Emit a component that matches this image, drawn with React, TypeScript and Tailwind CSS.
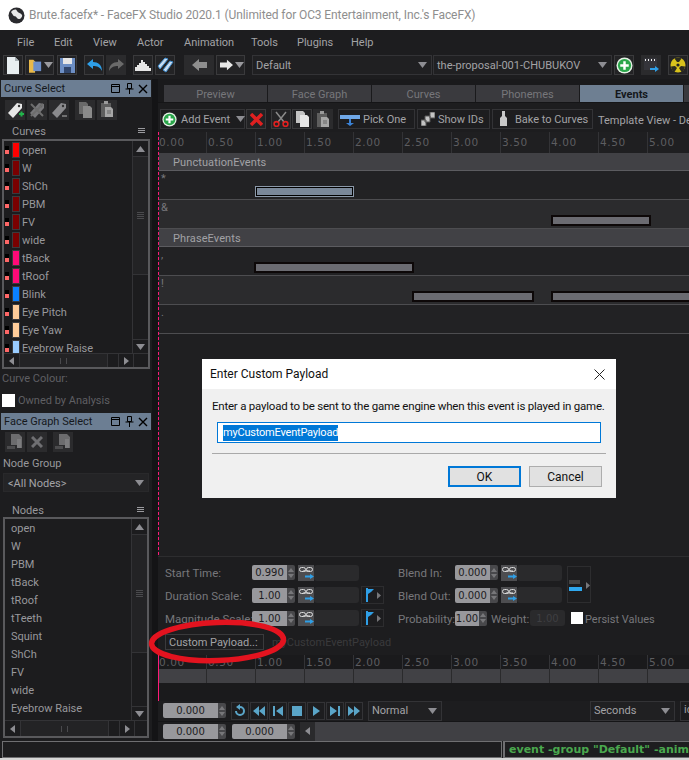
import type { ReactNode } from "react";

const curves = [
  ["open", "#ff0000"],
  ["W", "#7a0000"],
  ["ShCh", "#7a0000"],
  ["PBM", "#7a0000"],
  ["FV", "#7a0000"],
  ["wide", "#7a0000"],
  ["tBack", "#ff0a78"],
  ["tRoof", "#ff0a78"],
  ["Blink", "#0a80ff"],
  ["Eye Pitch", "#ffcc99"],
  ["Eye Yaw", "#ffcc99"],
  ["Eyebrow Raise", "#99ccff"],
];
const nodes = ["open", "W", "PBM", "tBack", "tRoof", "tTeeth", "Squint", "ShCh", "FV", "wide", "Eyebrow Raise"];
const ticks = ["0.00", "0.50", "1.00", "1.50", "2.00", "2.50", "3.00", "3.50", "4.00", "4.50", "5.00"];

function Btn({ w = 20, h = 20, children, flat }: { w?: number; h?: number; children?: ReactNode; flat?: boolean }) {
  return (
    <div
      className={`flex shrink-0 items-center justify-center ${flat ? "bg-[#2b2b2d]" : "border border-[#3a3a3c] bg-[#232325]"}`}
      style={{ width: w, height: h }}
    >
      {children}
    </div>
  );
}

function Caret({ color = "#8d8d92" }: { color?: string }) {
  return (
    <svg width="9" height="6" viewBox="0 0 9 6" className="shrink-0">
      <path d="M0 0h9L4.5 6z" fill={color} />
    </svg>
  );
}

function PageIcon({ fill = "#e8eef0" }: { fill?: string }) {
  return (
    <svg width="14" height="17" viewBox="0 0 14 17">
      <path d="M1 0h8l4 4v13H1z" fill={fill} />
      <path d="M9 0l4 4H9z" fill="#a8b0b4" />
    </svg>
  );
}

function CopyIcon({ dim }: { dim?: boolean }) {
  const c = dim ? "#8a8a8a" : "#e6e6e6";
  return (
    <svg width="15" height="16" viewBox="0 0 15 16">
      <path d="M1 0h7l2 2v10H1z" fill={dim ? "#6a6a6a" : "#c4c4c4"} />
      <path d="M5 4h7l2 2v10H5z" fill={c} />
    </svg>
  );
}

function NodeIcon() {
  return (
    <svg width="16" height="16" viewBox="0 0 16 16">
      <path d="M4 0h8l3 3v11h-5v-3H4z" fill="#6c6c6e" />
      <path d="M0 12h8v3H0z" fill="#4c4c4e" />
      <path d="M10 5h4v9h-4z" fill="#7c7c7e" />
    </svg>
  );
}

function PasteIcon() {
  return (
    <svg width="14" height="17" viewBox="0 0 14 17">
      <path d="M1 2h10v14H1z" fill="#5e5e5e" />
      <path d="M4 0h4v3H4z" fill="#9a9a9a" />
      <path d="M5 6h6l2 2v8H5z" fill="#a6a6a6" />
      <path d="M7 10h4M7 12h4" stroke="#666" />
    </svg>
  );
}

function Tag({ color = "#e8e8e8", mark }: { color?: string; mark?: "plus" | "x" | "minus" }) {
  return (
    <svg width="18" height="18" viewBox="0 0 18 18">
      <path d="M2 12L11 2l5 1 0 4-9 10z" fill={color} />
      <circle cx="13" cy="5" r="1.2" fill="#333" />
      {mark === "plus" && <path d="M13 13h5M15.5 10.5v5" stroke="#21b34a" strokeWidth="2" />}
      {mark === "minus" && <path d="M12 15h5" stroke="#888" strokeWidth="1.5" />}
      {mark === "x" && <path d="M3 3l12 12M15 3L3 15" stroke="#6d6d6d" strokeWidth="2" />}
    </svg>
  );
}

function PlusCircle({ size = 17 }: { size?: number }) {
  return (
    <svg width={size} height={size} viewBox="0 0 18 18" className="shrink-0">
      <circle cx="9" cy="9" r="8.5" fill="#e6f2e6" />
      <circle cx="9" cy="9" r="7" fill="#2aa64a" />
      <path d="M9 4.5v9M4.5 9h9" stroke="#fff" strokeWidth="2.6" />
    </svg>
  );
}

function Combo({ w, label, className = "" }: { w: number; label: string; className?: string }) {
  return (
    <div
      className={`flex h-[20px] shrink-0 items-center justify-between border border-[#333336] bg-[#202022] pr-[4px] pl-[3px] text-[11px] text-[#a3a3a6] ${className}`}
      style={{ width: w }}
    >
      <span className="pt-[2px] whitespace-nowrap">{label}</span>
      <Caret />
    </div>
  );
}

function Panel({ title }: { title: string }) {
  return (
    <div className="ml-[1px] flex h-[17px] w-[150px] items-center justify-between bg-[#6c7e93] pr-[3px] pl-[3px] text-[11px] leading-none text-[#15181c]">
      <span>{title}</span>
      <div className="flex items-center gap-[4px]">
        <svg width="10" height="10" viewBox="0 0 10 10" fill="none" stroke="#000">
          <path d="M.5.5h8v8h-8zM.5 2.5h8" />
        </svg>
        <svg width="9" height="11" viewBox="0 0 9 11" fill="none" stroke="#000">
          <path d="M2.5.5h4v5h-4zM.5 6h8M4.5 6v5" />
        </svg>
        <svg width="10" height="10" viewBox="0 0 10 10" stroke="#000" strokeWidth="1.4">
          <path d="M1 1l8 8M9 1L1 9" />
        </svg>
      </div>
    </div>
  );
}

function VScroll() {
  return (
    <div className="flex h-full w-[16px] shrink-0 flex-col border-l border-[#333336]">
      <div className="flex h-[16px] items-center justify-center border-b border-[#333336]">
        <svg width="9" height="6" viewBox="0 0 9 6">
          <path d="M4.5 0L9 6H0z" fill="#8d8d92" />
        </svg>
      </div>
      <div className="flex flex-1 flex-col">
        <div className="flex h-[118px] flex-col items-center justify-center gap-[1px] border-b border-[#333336] bg-[#232325]">
          <div className="h-[1px] w-[7px] bg-[#4a4a4d]" />
          <div className="h-[1px] w-[7px] bg-[#4a4a4d]" />
          <div className="h-[1px] w-[7px] bg-[#4a4a4d]" />
          <div className="h-[1px] w-[7px] bg-[#4a4a4d]" />
        </div>
      </div>
      <div className="flex h-[14px] items-center justify-center border-t border-[#333336]">
        <Caret />
      </div>
    </div>
  );
}

function HScroll({ h }: { h: number }) {
  return (
    <div className="flex shrink-0 border-t border-[#333336]" style={{ height: h }}>
      <div className="flex w-[16px] items-center justify-center border-r border-[#333336]">
        <svg width="5" height="8" viewBox="0 0 5 8">
          <path d="M5 0v8L0 4z" fill="#8d8d92" />
        </svg>
      </div>
      <div className="flex w-[88px] items-center justify-center border-r border-[#333336] bg-[#232325]">
        <div className="h-[6px] w-[7px] border-x border-[#4a4a4d]" />
      </div>
      <div className="w-[10px]" />
      <div className="flex w-[15px] items-center justify-center border-l border-[#333336]">
        <svg width="5" height="8" viewBox="0 0 5 8">
          <path d="M0 0v8l5-4z" fill="#8d8d92" />
        </svg>
      </div>
      <div className="flex-1 border-l border-[#333336]" />
    </div>
  );
}

function ListHeader({ title, x, h }: { title: string; x: number; h: number }) {
  return (
    <div className="flex items-center justify-between pr-[5px] text-[11px] text-[#98989c]" style={{ paddingLeft: x, height: h }}>
      <span className="pt-[3px]">{title}</span>
      <svg width="7" height="6" viewBox="0 0 7 6" stroke="#9a9a9e">
        <path d="M0 .5h7M0 2.5h7M0 4.5h7" />
      </svg>
    </div>
  );
}

function Spinner({ value, w = 43 }: { value: string; w?: number }) {
  return (
    <div className="flex h-[15px] shrink-0 items-stretch" style={{ width: w }}>
      <div className="flex flex-1 items-center justify-center rounded-l-[2px] bg-[#98989c] font-['DejaVu_Sans'] text-[10px] text-[#1c1c22]">
        {value}
      </div>
      <div className="flex w-[8px] flex-col items-center justify-center gap-[2px] rounded-r-[2px] bg-[#48484b]">
        <svg width="6" height="4" viewBox="0 0 6 4">
          <path d="M3 0l3 4H0z" fill="#77777a" />
        </svg>
        <svg width="6" height="4" viewBox="0 0 6 4">
          <path d="M3 4L0 0h6z" fill="#77777a" />
        </svg>
      </div>
    </div>
  );
}

function Link() {
  return (
    <div className="flex h-[16px] w-[16px] shrink-0 items-center justify-center bg-[#4d4d50]">
      <svg width="15" height="14" viewBox="0 0 15 14" fill="none">
        <rect x=".5" y="1.5" width="6" height="4" rx="2" stroke="#dcdcdc" />
        <rect x="7.5" y="1.5" width="6" height="4" rx="2" stroke="#dcdcdc" />
        <path d="M4 5h7" stroke="#dcdcdc" />
        <path d="M6 10.5h7" stroke="#2f9fe6" strokeWidth="2" />
        <path d="M11 8l4 2.5-4 2.5z" fill="#2f9fe6" />
      </svg>
    </div>
  );
}

function Flag() {
  return (
    <div className="ml-[2px] flex h-[18px] w-[23px] shrink-0 items-center gap-[3px] border border-[#2d2d2f] bg-[#1d1d1f] pl-[2px]">
      <svg width="10" height="14" viewBox="0 0 10 14">
        <path d="M2 0h2v14H2zM4 1h6L7 4 4 6z" fill="#2f9fe6" />
      </svg>
      <svg width="4" height="7" viewBox="0 0 4 7">
        <path d="M0 0l4 3.5L0 7z" fill="#77777a" />
      </svg>
    </div>
  );
}

function Field({ w = 45 }: { w?: number }) {
  return <div className="h-[16px] shrink-0 rounded-[3px] bg-[#2a2a2c]" style={{ width: w }} />;
}

function Ruler() {
  return (
    <div className="-ml-[1px] flex">
      {ticks.concat("5.50").map((t) => (
        <div key={t} className="h-[21px] w-[49px] shrink-0 border-r border-[#333336] pt-[4px] pl-[1px] font-['DejaVu_Sans'] text-[10.5px] leading-[12px] tracking-[.6px] whitespace-nowrap text-[#5d5d60]">
          {t}
        </div>
      ))}
    </div>
  );
}

function Track({ label, alt, children }: { label: string; alt?: boolean; children?: ReactNode }) {
  return (
    <div className={`relative h-[29px] border-b border-[#4d4d50] pt-[1px] pl-[2px] text-[11px] leading-[14px] text-[#77777b] ${alt ? "bg-[#2b2b2d]" : "bg-[#222224]"}`}>
      {label}
      {children}
    </div>
  );
}

function EventBar({ left, w, top, selected }: { left: number; w: number; top: number; selected?: boolean }) {
  return (
    <div
      className={`absolute h-[11px] ${selected ? "border border-[#8b98a8] bg-[#7a8899] outline-1 -outline-offset-2 outline-black" : "border-2 border-[#0d0808] bg-[#6b6b71]"}`}
      style={{ left, width: w, top }}
    />
  );
}

function GroupRow({ title }: { title: string }) {
  return (
    <div className="flex h-[18px] items-center border-b border-[#5c5c60] bg-[#414145] pt-[3px] pl-[14px] text-[11px] tracking-[.1px] text-[#a2a2a6]">
      {title}
    </div>
  );
}

function Transport({ children }: { children: ReactNode }) {
  return (
    <div className="flex h-[18px] w-[18px] shrink-0 items-center justify-center border border-[#333336] bg-[#1d1d1f]">
      <svg width="14" height="14" viewBox="0 0 14 14" fill="#5aa5c8">
        {children}
      </svg>
    </div>
  );
}

function PropLabel({ w, children }: { w: number; children: ReactNode }) {
  return (
    <span className="shrink-0 pt-[3px] whitespace-nowrap" style={{ width: w }}>
      {children}
    </span>
  );
}

export default function App() {
  return (
    <div className="relative h-[760px] w-[689px] overflow-hidden bg-[#1d1d1f] font-['Roboto',sans-serif]">
      {/* title bar */}
      <div className="flex h-[30px] items-center bg-white pl-[8px] text-[12px] tracking-[-.1px] text-[#8e8e8e]">
        <svg width="17" height="17" viewBox="0 0 17 17" className="mr-[4px]">
          <circle cx="8.5" cy="8.5" r="8" fill="#2a2a2e" />
          <path d="M3 5c3-3 5-3 6-1s4 2 5 4-3 6-5 3-3-1-4-3z" fill="#e8e8e8" />
        </svg>
        Brute.facefx* - FaceFX Studio 2020.1 (Unlimited for OC3 Entertainment, Inc.'s FaceFX)
      </div>

      {/* menu */}
      <div className="flex h-[25px] items-center pt-[2px] pl-[17px] text-[11px] text-[#a3a3a6]">
        <span className="w-[37px]">File</span>
        <span className="w-[39px]">Edit</span>
        <span className="w-[44px]">View</span>
        <span className="w-[47px]">Actor</span>
        <span className="w-[67px]">Animation</span>
        <span className="w-[46px]">Tools</span>
        <span className="w-[54px]">Plugins</span>
        <span>Help</span>
      </div>

      {/* main toolbar */}
      <div className="flex h-[24px] items-start pl-[3px]">
        <Btn><PageIcon /></Btn>
        <div className="ml-[2px] flex h-[20px] w-[29px] items-center gap-[2px] border border-[#3a3a3c] bg-[#232325] pl-[3px]">
          <svg width="15" height="17" viewBox="0 0 15 17">
            <path d="M0 2h5l2 2v13H0z" fill="#e9b949" />
            <path d="M5 4h9v11H5z" fill="#6d8fc9" />
          </svg>
          <Caret color="#9a9a9e" />
        </div>
        <div className="ml-[3px]">
          <Btn>
            <svg width="15" height="15" viewBox="0 0 15 15">
              <path d="M0 0h15v15H0z" fill="#6c8ec4" />
              <path d="M3 0h9v6H3z" fill="#e6e6e6" />
              <path d="M4 9h7v6H4z" fill="#30456b" />
            </svg>
          </Btn>
        </div>
        <div className="ml-[7px]">
          <Btn>
            <svg width="17" height="15" viewBox="0 0 17 15">
              <path d="M1 6l6-5v3c5 0 9 3 9 9-2-4-5-5-9-5v3z" fill="#2e9fe8" />
            </svg>
          </Btn>
        </div>
        <div className="ml-[2px]">
          <Btn flat>
            <svg width="17" height="15" viewBox="0 0 17 15">
              <path d="M16 6l-6-5v3C5 4 1 7 1 13c2-4 5-5 9-5v3z" fill="#6a6a6a" />
            </svg>
          </Btn>
        </div>
        <div className="ml-[7px]">
          <Btn>
            <svg width="16" height="12" viewBox="0 0 16 12">
              <path d="M0 12V8h2V6h2V4h2V1h2v2h2v2h2v2h2v2h2v3z" fill="#e6e6e6" />
            </svg>
          </Btn>
        </div>
        <div className="ml-[2px]">
          <Btn>
            <svg width="17" height="17" viewBox="0 0 17 17">
              <path d="M1 9l7-8 3 1-8 10zM6 13l7-9 3 1-7 10z" fill="#c8dcf0" stroke="#3c88c8" />
            </svg>
          </Btn>
        </div>
        <div className="ml-[9px]">
          <Btn w={30} flat>
            <svg width="15" height="12" viewBox="0 0 15 12">
              <path d="M0 6l7-6v3h8v6H7v3z" fill="#8e8e8e" />
            </svg>
          </Btn>
        </div>
        <div className="ml-[2px] flex h-[20px] w-[29px] items-center gap-[2px] border border-[#3a3a3c] bg-[#232325] pl-[3px]">
          <svg width="15" height="12" viewBox="0 0 15 12">
            <path d="M15 6L8 0v3H0v6h8v3z" fill="#e8e8e8" />
          </svg>
          <Caret color="#9a9a9e" />
        </div>
        <Combo w={180} label="Default" className="ml-[7px]" />
        <Combo w={179} label="the-proposal-001-CHUBUKOV" className="ml-[1px]" />
        <div className="ml-[2px]">
          <Btn><PlusCircle /></Btn>
        </div>
        <div className="ml-[7px]">
          <Btn flat>
            <svg width="16" height="16" viewBox="0 0 16 16">
              <path d="M1 1h13v12H1z" fill="#34343a" />
              <path d="M2 3h2M5 3h2M8 3h2M11 3h2" stroke="#eee" strokeWidth="2" strokeDasharray="1 1" />
              <path d="M7 12h6" stroke="#2f9fe6" strokeWidth="2" />
              <path d="M12 9l4 3-4 3z" fill="#2f9fe6" />
            </svg>
          </Btn>
        </div>
        <div className="ml-[7px]">
          <Btn>
            <svg width="16" height="16" viewBox="0 0 16 16">
              <circle cx="8" cy="8" r="7.5" fill="#d8c21c" />
              <circle cx="8" cy="8" r="1.6" fill="#222" />
              <path d="M7 5L4.5 1.5a7 7 0 0 1 7 0L9 5zM5 9l-4 .5a7 7 0 0 0 3.5 5.5L7 11zM11 9l4 .5a7 7 0 0 1-3.5 5.5L9 11z" fill="#2a2a20" />
            </svg>
          </Btn>
        </div>
      </div>

      {/* panels */}
      <div className="flex h-[662px]">
        <aside className="w-[152px] shrink-0">
          <div className="h-[1px]" />
          <Panel title="Curve Select" />
          <div className="flex h-[25px] items-center gap-[2px] pl-[5px]">
            <Btn flat><Tag mark="plus" /></Btn>
            <Btn flat><Tag color="#77777a" mark="x" /></Btn>
            <Btn flat><Tag color="#8a8a8d" mark="minus" /></Btn>
            <div className="w-[2px]" />
            <Btn flat><CopyIcon dim /></Btn>
            <Btn flat><PasteIcon /></Btn>
          </div>
          <div className="ml-[2px] w-[148px]">
            <ListHeader title="Curves" x={10} h={17} />
            <div className="flex h-[230px] flex-col border-2 border-[#59595c] bg-[#1c1c1e]">
              <div className="flex min-h-0 flex-1">
                <div className="flex-1 overflow-hidden">
                  {curves.map(([name, color]) => (
                    <div key={name} className="flex h-[18px] items-center text-[11px] text-[#98989c]">
                      <div className="ml-[1px] flex h-[8px] w-[4px] flex-col">
                        <div className="h-[4px] bg-black" />
                        <div className="h-[4px] bg-[#ff6666]" />
                      </div>
                      <div className="mr-[2px] ml-[3px] h-[16px] w-[8px] border border-[#3a3a3c]" style={{ backgroundColor: color }} />
                      <span className="pt-[2px]">{name}</span>
                    </div>
                  ))}
                </div>
                <VScroll />
              </div>
              <HScroll h={14} />
            </div>
          </div>
          <div className="mt-[2px] pl-[2px] text-[11px] leading-[16px] text-[#5f5f63]">Curve Colour:</div>
          <div className="mt-[6px] flex h-[14px] items-center gap-[3px] pl-[2px] text-[11px] text-[#5f5f63]">
            <div className="h-[13px] w-[13px] bg-white" />
            <span className="pt-[2px]">Owned by Analysis</span>
          </div>
          <div className="h-[6px]" />
          <Panel title="Face Graph Select" />
          <div className="flex h-[23px] items-center gap-[2px] pl-[5px]">
            <Btn flat><NodeIcon /></Btn>
            <Btn flat>
              <svg width="12" height="12" viewBox="0 0 12 12" stroke="#6f6f72" strokeWidth="3">
                <path d="M1 1l10 10M11 1L1 11" />
              </svg>
            </Btn>
            <div className="w-[2px]" />
            <Btn flat><NodeIcon /></Btn>
          </div>
          <div className="mt-[3px] pl-[3px] text-[11px] leading-[16px] text-[#98989c]">Node Group</div>
          <div className="mt-[1px] ml-[3px] flex h-[19px] w-[146px] items-center justify-between border border-[#29292b] bg-[#242426] pr-[4px] pl-[4px] text-[11px] text-[#a3a3a6]">
            <span className="pt-[3px]">&lt;All Nodes&gt;</span>
            <Caret />
          </div>
          <div className="mt-[10px] ml-[3px] w-[146px]">
            <ListHeader title="Nodes" x={9} h={15} />
            <div className="flex h-[221px] flex-col border-2 border-[#59595c] bg-[#1c1c1e]">
              <div className="flex min-h-0 flex-1">
                <div className="flex-1 overflow-hidden pl-[6px] text-[11px] text-[#98989c]">
                  {nodes.map((n) => (
                    <div key={n} className="flex h-[18px] items-center pt-[2px]">{n}</div>
                  ))}
                </div>
                <VScroll />
              </div>
              <HScroll h={16} />
            </div>
          </div>
        </aside>

        <div className="w-[6px] shrink-0 bg-[#141416]" />

        <main className="min-w-0 flex-1">
          {/* tabs */}
          <div className="flex h-[24px] items-end gap-[1px] border-b border-[#151517] bg-[#1a1a1c] pl-[6px] text-[11px] text-[#77777b]">
            {["Preview", "Face Graph", "Curves", "Phonemes"].map((t) => (
              <div key={t} className="flex h-[17px] w-[103px] shrink-0 items-center justify-center bg-[#3a3a3e] pt-[4px]">{t}</div>
            ))}
            <div className="flex h-[17px] w-[103px] shrink-0 items-center justify-center bg-[#6e7f92] pt-[4px] font-bold text-[#14171b]">Events</div>
            <div className="h-[17px] w-[20px] shrink-0 bg-[#3a3a3e]" />
          </div>

          {/* event toolbar */}
          <div className="flex h-[29px] items-start overflow-hidden pt-[6px] pl-[2px] text-[11px] whitespace-nowrap text-[#a3a3a6]">
            <div className="flex h-[20px] w-[85px] shrink-0 items-center gap-[4px] border border-[#333336] pl-[1px]">
              <PlusCircle size={15} />
              <span className="pt-[2px]">Add Event</span>
              <span className="ml-[2px]"><Caret /></span>
            </div>
            <div className="ml-[1px]">
              <Btn>
                <svg width="13" height="13" viewBox="0 0 13 13" stroke="#e02020" strokeWidth="3.4">
                  <path d="M1 1l11 11M12 1L1 12" />
                </svg>
              </Btn>
            </div>
            <div className="ml-[5px]">
              <Btn>
                <svg width="16" height="16" viewBox="0 0 16 16" fill="none">
                  <path d="M3 1l8 10M13 1L5 11" stroke="#8a8a8a" strokeWidth="1.5" />
                  <circle cx="3.5" cy="13" r="2.4" stroke="#e02020" strokeWidth="1.6" />
                  <circle cx="12.5" cy="13" r="2.4" stroke="#e02020" strokeWidth="1.6" />
                </svg>
              </Btn>
            </div>
            <div className="ml-[1px]"><Btn><CopyIcon /></Btn></div>
            <div className="ml-[1px]"><Btn flat><PasteIcon /></Btn></div>
            <div className="ml-[5px] flex h-[20px] w-[77px] shrink-0 items-center gap-[3px] border border-[#333336] pl-[1px]">
              <svg width="20" height="13" viewBox="0 0 20 13">
                <path d="M0 2h20v4H0z" fill="#6fa8e8" />
                <path d="M9 6h2v4h3l-4 3-4-3h3z" fill="#3b82d6" />
              </svg>
              <span className="pt-[2px]">Pick One</span>
            </div>
            <div className="ml-[2px] flex h-[20px] w-[73px] shrink-0 items-center gap-[3px] border border-[#333336] pl-[3px]">
              <svg width="14" height="14" viewBox="0 0 14 14" fill="#c4c4c4">
                <path d="M0 8h5v6H0zM4 4h5v6H4zM9 0h5v6H9z" stroke="#555" />
              </svg>
              <span className="pt-[2px]">Show IDs</span>
            </div>
            <div className="ml-[2px] flex h-[20px] w-[101px] shrink-0 items-center gap-[7px] border border-[#333336] pl-[6px]">
              <svg width="9" height="16" viewBox="0 0 9 16" fill="#c8c8c8">
                <path d="M3 0h3v5l2 2v8H1V7l2-2z" />
              </svg>
              <span className="pt-[2px]">Bake to Curves</span>
            </div>
            <span className="ml-[5px] pt-[4px]">Template View - Default</span>
          </div>

          {/* timeline */}
          <div className="flex h-[424px] bg-[#1f1f21]">
            <div className="w-[1px] shrink-0 bg-[repeating-linear-gradient(to_bottom,#ff1a78_0,#ff1a78_3px,transparent_3px,transparent_5px)]" />
            <div className="min-w-0 flex-1 overflow-hidden">
              <Ruler />
              <GroupRow title="PunctuationEvents" />
              <Track label="*">
                <EventBar left={96} w={99} top={15} selected />
              </Track>
              <Track label="&" alt>
                <EventBar left={392} w={100} top={15} />
              </Track>
              <GroupRow title="PhraseEvents" />
              <Track label=",">
                <EventBar left={95} w={160} top={15} />
              </Track>
              <Track label="!" alt>
                <EventBar left={253} w={122} top={15} />
                <EventBar left={392} w={140} top={15} />
              </Track>
              <Track label=".">{null}</Track>
            </div>
          </div>

          {/* properties */}
          <div className="h-[99px] border-t border-[#2d2d2f] pl-[7px] text-[11.5px] text-[#77777b]">
            <div className="flex h-[22px] items-center pt-[9px]">
              <div className="flex items-center">
                <PropLabel w={87}>Start Time:</PropLabel>
                <Spinner value="0.990" />
                <div className="w-[3px]" />
                <Link />
                <Field />
                <div className="w-[25px]" />
              </div>
              <div className="ml-[14px] flex items-center">
                <PropLabel w={57}>Blend In:</PropLabel>
                <Spinner value="0.000" />
                <div className="w-[3px]" />
                <Link />
                <Field />
              </div>
            </div>
            <div className="mt-[8px] flex h-[16px] items-center">
              <PropLabel w={87}>Duration Scale:</PropLabel>
              <Spinner value="1.00" />
              <div className="w-[3px]" />
              <Link />
              <Field />
              <Flag />
              <div className="ml-[14px] flex items-center">
                <PropLabel w={57}>Blend Out:</PropLabel>
                <Spinner value="0.000" />
                <div className="w-[3px]" />
                <Link />
                <Field />
              </div>
              <div className="relative ml-[5px] h-[37px] w-[24px] shrink-0 -translate-y-[11px] border border-[#2d2d2f] bg-[#1d1d1f]">
                <div className="absolute top-[13px] left-[1px] h-[4px] w-[11px] bg-[#444]" />
                <div className="absolute top-[20px] left-[1px] h-[4px] w-[13px] bg-[#2fa8ee]" />
                <svg width="4" height="7" viewBox="0 0 4 7" className="absolute top-[15px] left-[18px]">
                  <path d="M0 0l4 3.5L0 7z" fill="#77777a" />
                </svg>
              </div>
            </div>
            <div className="mt-[7px] flex h-[16px] items-center">
              <PropLabel w={87}>Magnitude Scale:</PropLabel>
              <Spinner value="1.00" />
              <div className="w-[3px]" />
              <Link />
              <Field />
              <Flag />
              <div className="ml-[14px] flex items-center">
                <PropLabel w={57}>Probability:</PropLabel>
                <Spinner value="1.00" w={32} />
                <span className="ml-[4px] w-[39px] pt-[3px]">Weight:</span>
                <div className="flex h-[16px] w-[35px] items-center justify-center rounded-[3px] bg-[#2a2a2c] font-['DejaVu_Sans'] text-[10px] text-[#3f3f42]">1.00</div>
                <div className="ml-[6px] h-[12px] w-[12px] bg-white" />
                <span className="ml-[2px] pt-[4px] text-[11px] whitespace-nowrap">Persist Values</span>
              </div>
            </div>
            <div className="mt-[7px] flex items-center text-[11px]">
              <div className="flex h-[16px] w-[99px] shrink-0 items-center border border-[#3a3a3c] pt-[2px] pl-[3px] whitespace-nowrap text-[#a3a3a6]">Custom Payload..:</div>
              <span className="ml-[8px] pt-[2px] text-[#3a3a3c]">myCustomEventPayload</span>
            </div>
          </div>

          {/* lower ruler */}
          <div className="h-[46px] overflow-hidden border-l border-[#ff1a78] bg-[#1a1a1c]">
            <div className="-mt-[3px] -mb-[4px]"><Ruler /></div>
            <div className="-ml-[1px] flex h-[14px] bg-[#414145]">
              {ticks.concat("5.50").map((t) => (
                <div key={t} className="h-full w-[49px] shrink-0 border-r border-[#2a2a2c]" />
              ))}
            </div>
          </div>

          {/* transport */}
          <div className="flex h-[20px] items-center pb-[1px] pl-[5px]">
            <Spinner value="0.000" w={63} />
            <div className="ml-[5px] flex gap-[1px]">
              <Transport>
                <path d="M7 2a5 5 0 1 1-5 5h2a3 3 0 1 0 3-3v2L3 3l4-3z" />
              </Transport>
              <Transport>
                <path d="M7 2v10L1 7zM13 2v10L7 7z" />
              </Transport>
              <Transport>
                <path d="M2 2h2v10H2zM12 2v10L5 7z" />
              </Transport>
              <Transport>
                <path d="M2 2h10v10H2z" />
              </Transport>
              <Transport>
                <path d="M4 2v10l7-5z" />
              </Transport>
              <Transport>
                <path d="M2 2v10l7-5zM10 2h2v10h-2z" />
              </Transport>
              <Transport>
                <path d="M1 2v10l6-5zM7 2v10l6-5z" />
              </Transport>
            </div>
            <Combo w={74} label="Normal" className="ml-[5px]" />
            <Combo w={85} label="Seconds" className="ml-[148px]" />
            <div className="ml-[5px] flex h-[20px] w-[20px] shrink-0 items-center overflow-hidden border border-[#333336] pl-[3px] text-[11px] text-[#a3a3a6]">id</div>
          </div>
          <div className="flex h-[20px] items-center border-t border-[#151517] pb-[1px] pl-[5px]">
            <Spinner value="0.000" w={63} />
            <div className="ml-[6px]"><Spinner value="0.000" w={63} /></div>
            <div className="ml-[5px] flex h-[19px] flex-1 bg-[#404044]">
              <div className="flex w-[15px] items-center justify-center bg-[#2a2a2c]">
                <svg width="5" height="8" viewBox="0 0 5 8">
                  <path d="M5 0v8L0 4z" fill="#8d8d92" />
                </svg>
              </div>
            </div>
          </div>
        </main>
      </div>

      {/* status */}
      <div className="flex h-[17px] items-stretch gap-[1px] pl-[2px]">
        <div className="w-[500px] shrink-0 border border-[#6f6f72]" />
        <div className="flex-1 overflow-hidden border-y border-l-2 border-[#6f6f72] pl-[4px] font-['DejaVu_Sans'] text-[11px] leading-[15px] font-bold whitespace-nowrap text-[#4aa84e]">
          event -group "Default" -anim "the-proposal
        </div>
      </div>
      <div className="h-[2px] bg-[#d6d6d6]" />

      {/* dialog */}
      <div className="absolute top-[359px] left-[202px] flex h-[139px] w-[414px] flex-col bg-[#f0f0f0] text-[12px] text-[#111]">
        <div className="flex h-[30px] items-center justify-between bg-white pr-[11px] pl-[8px]">
          <span>Enter Custom Payload</span>
          <svg width="11" height="11" viewBox="0 0 11 11" stroke="#222">
            <path d="M.5.5l10 10M10.5.5l-10 10" />
          </svg>
        </div>
        <div className="mt-[9px] pl-[10px] text-[11.5px] tracking-[-.22px] whitespace-nowrap">Enter a payload to be sent to the game engine when this event is played in game.</div>
        <div className="mt-[7px] ml-[15px] flex h-[21px] w-[384px] items-center border border-[#0078d7] bg-white pl-[5px]">
          <span className="bg-[#0078d7] text-[11px] tracking-[-.2px] text-white">myCustomEventPayload</span>
        </div>
        <div className="mx-[10px] mt-[10px] border-t border-[#a9a9a9]" />
        <div className="mt-[12px] flex justify-end gap-[8px] pr-[14px]">
          <div className="flex h-[21px] w-[73px] items-center justify-center border-2 border-[#0078d7] bg-[#e1e1e1]">OK</div>
          <div className="flex h-[21px] w-[73px] items-center justify-center border border-[#adadad] bg-[#e1e1e1]">Cancel</div>
        </div>
      </div>

      {/* red marker around the payload button */}
      <svg width="142" height="48" viewBox="0 0 142 48" className="absolute top-[618px] left-[146px]" fill="none">
        <ellipse cx="71.5" cy="23.5" rx="66" ry="19" stroke="#e3131f" strokeWidth="5.5" transform="rotate(-2 71.5 23.5)" />
      </svg>
    </div>
  );
}
